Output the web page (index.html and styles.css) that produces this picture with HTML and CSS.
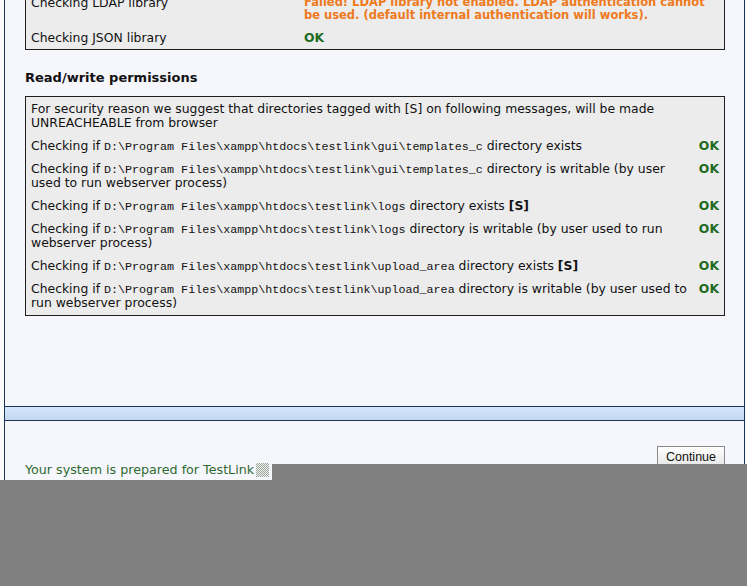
FILE: index.html
```html
<!DOCTYPE html>
<html>
<head>
<meta charset="utf-8">
<title>TestLink Installation</title>
<link rel="stylesheet" href="styles.css">
</head>
<body>
<div class="frame">
  <div class="main">
    <div class="box box-libs">
      <div class="row">
        <div class="label">Checking LDAP library</div>
        <div class="status fail">Failed! LDAP library not enabled. LDAP authentication cannot<br>be used. (default internal authentication will works).</div>
      </div>
      <div class="row">
        <div class="label">Checking JSON library</div>
        <div class="status ok">OK</div>
      </div>
    </div>

    <h2 class="heading">Read/write permissions</h2>

    <div class="box box-perms">
      <div class="row intro">
        <div class="label">For security reason we suggest that directories tagged with [S] on following messages, will be made UNREACHEABLE from browser</div>
      </div>
      <div class="row">
        <div class="label">Checking if <code>D:\Program Files\xampp\htdocs\testlink\gui\templates_c</code> directory exists</div>
        <div class="status ok">OK</div>
      </div>
      <div class="row">
        <div class="label">Checking if <code>D:\Program Files\xampp\htdocs\testlink\gui\templates_c</code> directory is writable (by user used to run webserver process)</div>
        <div class="status ok">OK</div>
      </div>
      <div class="row">
        <div class="label">Checking if <code>D:\Program Files\xampp\htdocs\testlink\logs</code> directory exists <b>[S]</b></div>
        <div class="status ok">OK</div>
      </div>
      <div class="row">
        <div class="label">Checking if <code>D:\Program Files\xampp\htdocs\testlink\logs</code> directory is writable (by user used to run webserver process)</div>
        <div class="status ok">OK</div>
      </div>
      <div class="row">
        <div class="label">Checking if <code>D:\Program Files\xampp\htdocs\testlink\upload_area</code> directory exists <b>[S]</b></div>
        <div class="status ok">OK</div>
      </div>
      <div class="row">
        <div class="label">Checking if <code>D:\Program Files\xampp\htdocs\testlink\upload_area</code> directory is writable (by user used to run webserver process)</div>
        <div class="status ok">OK</div>
      </div>
    </div>
  </div>

  <div class="bar"></div>

  <div class="footer">
    <div class="ready">Your system is prepared for TestLink<span class="broken"></span></div>
    <button class="btn" type="button">Continue</button>
  </div>
</div>
<div class="shade shade-right"></div>
<div class="shade shade-bottom"></div>
</body>
</html>
```
FILE: styles.css
```css
html, body {
  margin: 0;
  padding: 0;
  background: #fbfbfb;
}

body {
  font-family: "DejaVu Sans", Verdana, sans-serif;
  font-size: 12.4px;
  color: #111;
  overflow: hidden;
}

.frame {
  margin: -10px 2px 0 4px;
  border-left: 1px solid #1b3557;
  border-right: 1px solid #1b3557;
  background: #f6f6fd;
  min-height: 620px;
}

.main {
  padding: 0 19px 90px 20px;
}

.box {
  border: 1px solid #1e1e1e;
  background: #ececec;
  padding: 0 5px;
}

.box-perms {
  margin-top: -1px;
  padding-bottom: 1px;
}

.row {
  display: grid;
  grid-template-columns: 1fr auto;
  column-gap: 6px;
  padding: 5px 0 4px;
  line-height: 14px;
}

.box-libs .row {
  grid-template-columns: 264px 1fr;
  column-gap: 9px;
}

.status {
  font-weight: bold;
}

.ok {
  color: #1f6b1f;
}

.fail {
  color: #ee7a1c;
  font-size: 11.5px;
  line-height: 13px;
  white-space: nowrap;
}

code {
  font-family: "Liberation Mono", "Courier New", monospace;
  font-size: 11.7px;
  line-height: 10px;
}

.heading {
  font-size: 13px;
  font-weight: bold;
  line-height: 16px;
  margin: 20px 0 11px;
  color: #111;
}

.bar {
  height: 13px;
  border-top: 1px solid #1b3557;
  border-bottom: 1px solid #1b3557;
  background: linear-gradient(#d4e7fb, #c2d8f1);
}

.footer {
  display: flex;
  justify-content: space-between;
  align-items: flex-start;
  padding: 25px 19px 0 20px;
}

.ready {
  color: #2f6b2f;
  font-size: 12.7px;
  line-height: 15px;
  padding-top: 16px;
  display: flex;
  align-items: center;
}

.broken {
  display: inline-block;
  width: 13px;
  height: 14px;
  margin-left: 2px;
  background: repeating-conic-gradient(#9aa69a 0 25%, #f0f3f0 0 50%) 0 0 / 2px 2px;
}

.btn {
  font-family: "Liberation Sans", Arial, sans-serif;
  font-size: 12.5px;
  color: #111;
  height: 21px;
  padding: 0 8px;
  border: 1px solid #8a8a8a;
  border-radius: 0;
  background: linear-gradient(#ffffff, #e6e6e6);
}

.shade {
  position: fixed;
  background: #808080;
  right: 0;
  bottom: 0;
}

.shade-right {
  left: 272px;
  top: 464px;
}

.shade-bottom {
  left: 0;
  top: 480px;
}
```
